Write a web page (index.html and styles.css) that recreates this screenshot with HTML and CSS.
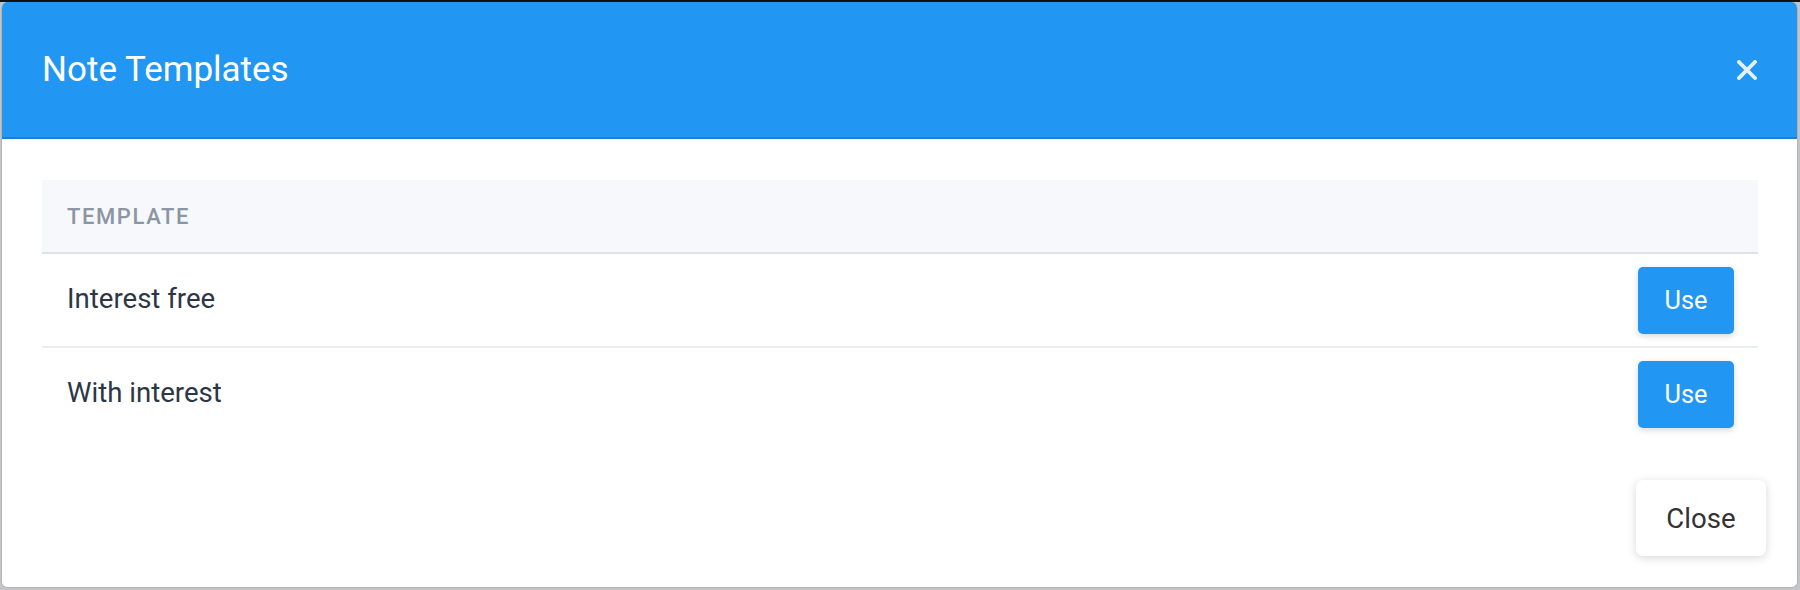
FILE: index.html
```html
<!DOCTYPE html>
<html lang="en">
<head>
<meta charset="utf-8">
<title>Note Templates</title>
<link rel="stylesheet" href="styles.css">
</head>
<body>
<div class="dialog">
  <header class="dialog-header">
    <h1 class="dialog-title">Note Templates</h1>
    <button class="icon-close" aria-label="Close">
      <svg width="20" height="20" viewBox="0 0 20 20"><path d="M2 2L18 18M18 2L2 18" stroke="currentColor" stroke-width="3.8" stroke-linecap="square"/></svg>
    </button>
  </header>
  <div class="dialog-body">
    <table class="tpl-table">
      <thead>
        <tr><th>Template</th><th class="act"></th></tr>
      </thead>
      <tbody>
        <tr><td class="name">Interest free</td><td class="act"><button class="btn-use">Use</button></td></tr>
        <tr><td class="name">With interest</td><td class="act"><button class="btn-use">Use</button></td></tr>
      </tbody>
    </table>
  </div>
  <footer class="dialog-footer">
    <button class="btn-close">Close</button>
  </footer>
</div>
</body>
</html>
```
FILE: styles.css
```css
html, body {
  margin: 0;
  padding: 0;
}
body {
  width: 1800px;
  height: 590px;
  background: linear-gradient(#111 0 2px, #c2c4c8 2px);
  font-family: Roboto, "Liberation Sans", sans-serif;
  overflow: hidden;
}
.dialog {
  margin: 2px 2px 2px 1px;
  height: 586px;
  box-sizing: border-box;
  background: #fff;
  border: 1px solid #b4b4b4;
  border-top: none;
  border-radius: 6px;
  overflow: hidden;
  display: flex;
  flex-direction: column;
}
.dialog-header {
  height: 137px;
  box-sizing: border-box;
  background: #2196f3;
  border-bottom: 2px solid #1b80d4;
  display: flex;
  align-items: center;
  justify-content: space-between;
  padding: 0 41px 0 41px;
  margin: 0 -1px;
}
.dialog-title {
  margin: 0;
  font-size: 35px;
  font-weight: 400;
  color: #fff;
  line-height: 1;
}
.icon-close {
  background: none;
  border: none;
  padding: 0;
  width: 20px;
  height: 20px;
  color: #e3f1fd;
  display: flex;
}
.dialog-body {
  padding: 41px 39px 0 40px;
}
.tpl-table {
  width: 100%;
  border-collapse: collapse;
}
.tpl-table th {
  height: 72px;
  padding: 0 25px;
  text-align: left;
  font-size: 22px;
  font-weight: 500;
  letter-spacing: 1.6px;
  text-transform: uppercase;
  color: #8c95a3;
  background: #f7f8fb;
  border-bottom: 2px solid #dce2ea;
}
.tpl-table td {
  padding: 12px 24px 12px 25px;
  font-size: 27.6px;
  color: #2d3646;
  height: 68px;
}
.tpl-table td.name {
  padding-top: 10px;
  padding-bottom: 14px;
}
.tpl-table tbody tr:first-child td {
  border-bottom: 2px solid #ebeff4;
}
.tpl-table .act {
  text-align: right;
}
.btn-use {
  width: 96px;
  height: 67px;
  border: none;
  border-radius: 5px;
  background: #2196f3;
  color: #fff;
  font-family: inherit;
  font-size: 25.3px;
  box-shadow: 0 2px 6px rgba(0, 0, 0, 0.16);
  vertical-align: middle;
}
.dialog-footer {
  margin-top: auto;
  display: flex;
  justify-content: flex-end;
  padding: 0 31px 31px 0;
}
.btn-close {
  width: 130px;
  height: 76px;
  border: none;
  border-radius: 7px;
  background: #fff;
  color: #333;
  font-family: inherit;
  font-size: 27.6px;
  box-shadow: 0 2px 10px rgba(0, 0, 0, 0.16);
}
```
